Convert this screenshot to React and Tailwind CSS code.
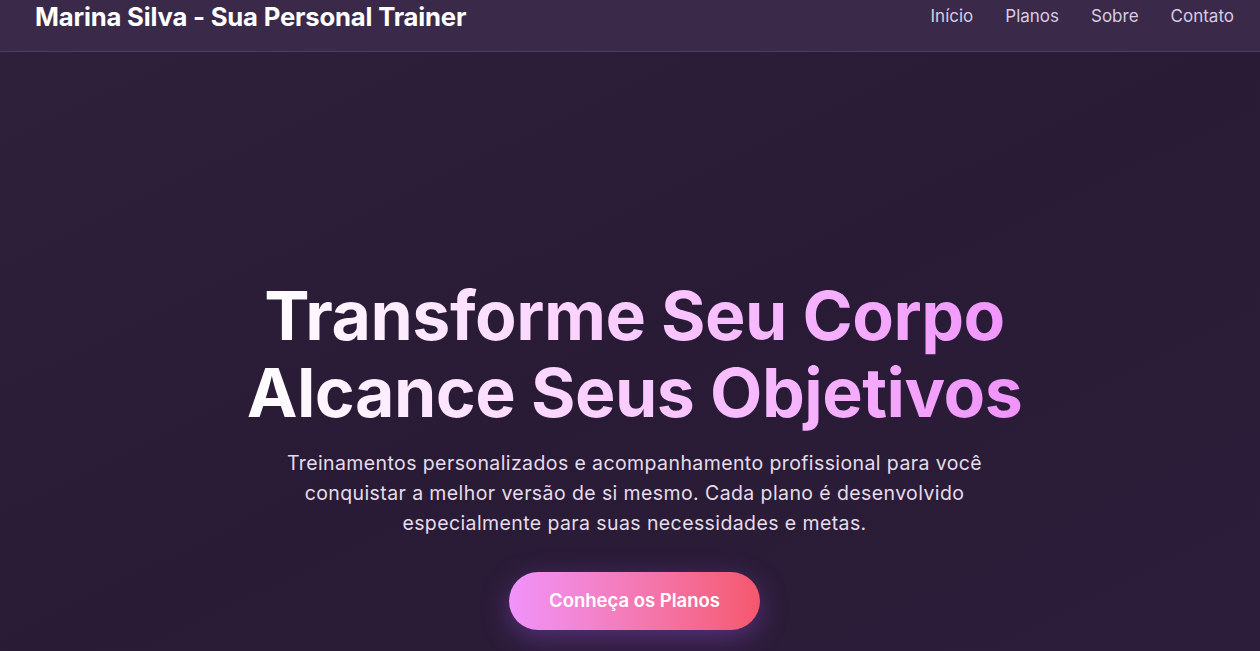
export default function App() {
  return (
    <div
      className="min-h-screen bg-[#2b1d38] text-white"
      style={{ fontFamily: "Inter, 'Noto Sans', sans-serif" }}
    >
      {/* Header */}
      <header className="h-[52px] bg-[#3a2948] border-b border-white/10 px-[35px] pb-[17px]">
        <div className="h-[34px] flex items-center justify-between">
          <h1 className="text-[25.7px] font-bold tracking-[-0.2px] text-white">
            Marina Silva - Sua Personal Trainer
          </h1>
          <nav className="flex items-center gap-8 -mr-[9px] text-[17px] text-[#d9cde3]">
            <a href="#inicio">Início</a>
            <a href="#planos">Planos</a>
            <a href="#sobre">Sobre</a>
            <a href="#contato">Contato</a>
          </nav>
        </div>
      </header>

      {/* Hero */}
      <section className="bg-gradient-to-br from-[#2e1f3b] via-[#291b35] to-[#2c1d3a] pl-[9px] pt-[225px] pb-[40px] flex flex-col items-center text-center">
        <h2 className="text-[68px] leading-[77px] font-bold tracking-[-0.5px] bg-gradient-to-r from-white to-[#f093fb] bg-clip-text text-transparent">
          Transforme Seu Corpo
          <br />
          Alcance Seus Objetivos
        </h2>
        <p className="mt-[17px] max-w-[730px] text-[19.5px] leading-[30px] tracking-[0.4px] text-[#e6dcec]">
          Treinamentos personalizados e acompanhamento profissional para você
          conquistar a melhor versão de si mesmo. Cada plano é desenvolvido
          especialmente para suas necessidades e metas.
        </p>
        <a
          href="#planos"
          className="mt-[34px] w-[251px] h-[58px] rounded-full bg-gradient-to-r from-[#f093fb] to-[#f5576c] flex items-center justify-center text-[18.5px] font-semibold text-white shadow-[0_8px_28px_rgba(168,85,247,0.35)]"
        >
          Conheça os Planos
        </a>
      </section>
    </div>
  );
}
